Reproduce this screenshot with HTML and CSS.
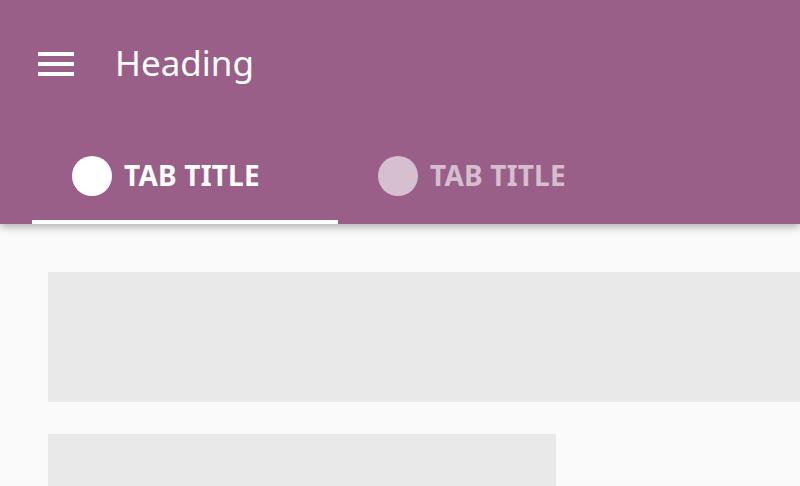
FILE: index.html
```html
<!DOCTYPE html>
<html lang="en">
<head>
  <meta charset="UTF-8">
  <title>Heading</title>
  <link rel="stylesheet" href="styles.css">
</head>
<body>
<header class="appbar">
  <div class="toolbar">
    <button class="menu" type="button" aria-label="Menu">
      <svg width="48" height="48" viewBox="0 0 48 48">
        <rect x="6" y="12" width="36" height="4" fill="#fff"/>
        <rect x="6" y="22" width="36" height="4" fill="#fff"/>
        <rect x="6" y="32" width="36" height="4" fill="#fff"/>
      </svg>
    </button>
    <h1 class="title">Heading</h1>
  </div>
  <nav class="tabs">
    <a class="tab active" href="#">
      <span class="tab-icon"></span>
      <span class="tab-label">TAB TITLE</span>
    </a>
    <a class="tab" href="#">
      <span class="tab-icon"></span>
      <span class="tab-label">TAB TITLE</span>
    </a>
  </nav>
</header>
<main class="content">
  <div class="block wide"></div>
  <div class="block half"></div>
</main>
</body>
</html>
```

FILE: styles.css
```css
body {
  margin: 0;
  font-family: 'Noto Sans', 'Open Sans', sans-serif;
  background: #fafafa;
  height: 100vh;
  overflow: hidden;
}

.appbar {
  position: relative;
  z-index: 1;
  background: #995f88;
  color: #fff;
  box-shadow: 0 3px 8px rgba(0, 0, 0, 0.3);
}

.toolbar {
  display: flex;
  align-items: center;
  height: 128px;
  padding-left: 32px;
}

.menu {
  display: block;
  width: 48px;
  height: 48px;
  padding: 0;
  border: none;
  background: none;
}

.menu svg {
  display: block;
}

.title {
  margin: 0 0 4px 35px;
  font-size: 35px;
  font-weight: 400;
  line-height: 1;
}

.tabs {
  display: flex;
  height: 96px;
  padding-left: 32px;
}

.tab {
  display: flex;
  align-items: center;
  box-sizing: border-box;
  width: 306px;
  padding: 4px 0 0 40px;
  color: rgba(255, 255, 255, 0.6);
  text-decoration: none;
  border-bottom: 4px solid transparent;
}

.tab.active {
  color: #fff;
  border-bottom-color: #fff;
}

.tab-icon {
  width: 40px;
  height: 40px;
  border-radius: 50%;
  background: currentColor;
  margin-right: 12px;
}

.tab-label {
  font-size: 28px;
  font-weight: 700;
  letter-spacing: 0.2px;
  margin-top: -2px;
}

.content {
  height: calc(100vh - 224px);
  box-sizing: border-box;
  padding: 48px 0 0 48px;
  overflow: hidden;
}

.block {
  background: #e9e9e9;
  margin-bottom: 32px;
}

.wide {
  height: 130px;
}

.half {
  width: 508px;
  height: 130px;
}
```
